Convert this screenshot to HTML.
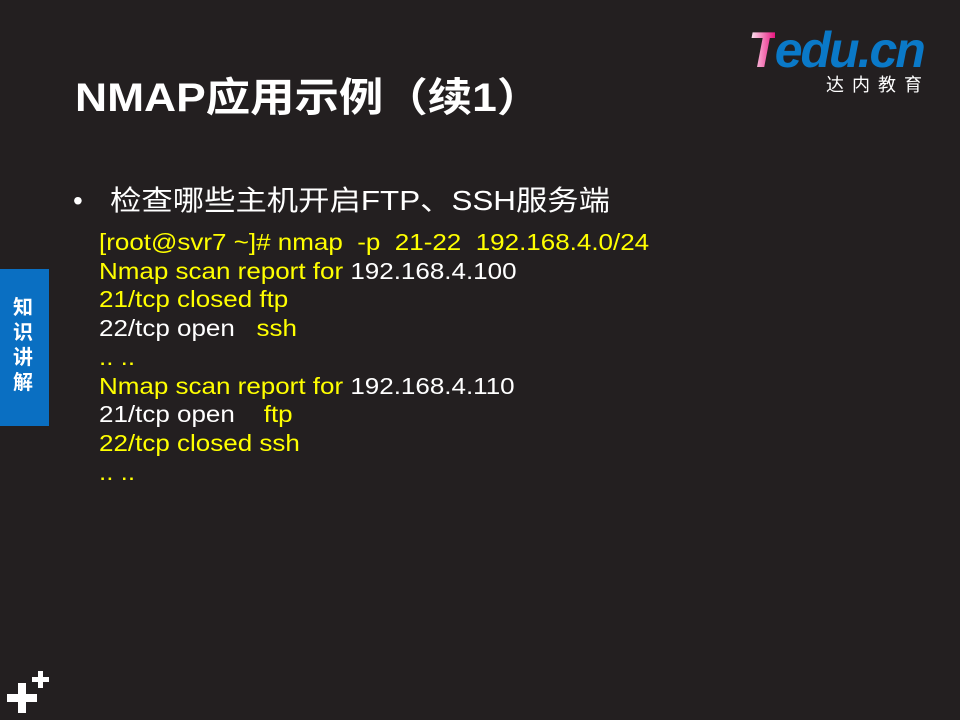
<!DOCTYPE html>
<html><head><meta charset="utf-8"><style>
body{margin:0;width:960px;height:720px;background:#231f20;position:relative;overflow:hidden;font-family:"Liberation Sans","Noto Sans CJK SC",sans-serif;}
.a{position:absolute;white-space:nowrap;transform-origin:0 0}
.y{color:#ffff00}.w{color:#fff}
.code{left:99px;font-size:23px;line-height:28.7px;top:228px;transform:scaleX(1.13)}
</style></head><body>
<div class="a w" style="left:75px;top:70px;font-size:40px;font-weight:bold;line-height:56px;transform:scaleX(1.11)">NMAP应用示例（续1）</div>
<div class="a" style="left:748px;top:24px;font-size:50px;font-weight:bold;font-style:italic;letter-spacing:-2px;line-height:52px"><span style="background:linear-gradient(90deg,#fff,#e8157f);-webkit-background-clip:text;color:transparent">T</span><span style="color:#0a79c8">edu.cn</span></div>
<div class="a w" style="left:826px;top:74px;font-size:18px;letter-spacing:8px;line-height:22px">达内教育</div>
<div class="a" style="left:0;top:269px;width:49px;height:157px;background:#0a6fc2"></div>
<div class="a w" style="left:13px;top:296px;font-size:20px;font-weight:bold;line-height:25px;width:24px;white-space:normal">知识讲解</div>
<div class="a w" style="left:73px;top:183px;font-size:28px;line-height:36px">•</div>
<div class="a w" style="left:110px;top:183px;font-size:28px;line-height:36px;transform:scaleX(1.12)">检查哪些主机开启FTP、SSH服务端</div>
<div class="a code" style="white-space:pre"><span class="y">[root@svr7 ~]# nmap  -p  21-22  192.168.4.0/24</span>
<span class="y">Nmap scan report for </span><span class="w">192.168.4.100</span>
<span class="y">21/tcp closed ftp</span>
<span class="w">22/tcp open   </span><span class="y">ssh</span>
<span class="y">.. ..</span>
<span class="y">Nmap scan report for </span><span class="w">192.168.4.110</span>
<span class="w">21/tcp open    </span><span class="y">ftp</span>
<span class="y">22/tcp closed ssh</span>
<span class="y">.. ..</span></div>
<div class="a" style="left:7px;top:694px;width:30px;height:8px;background:#fff"></div>
<div class="a" style="left:18px;top:683px;width:8px;height:30px;background:#fff"></div>
<div class="a" style="left:32px;top:677px;width:17px;height:5px;background:#fff"></div>
<div class="a" style="left:38px;top:671px;width:5px;height:17px;background:#fff"></div>
</body></html>
